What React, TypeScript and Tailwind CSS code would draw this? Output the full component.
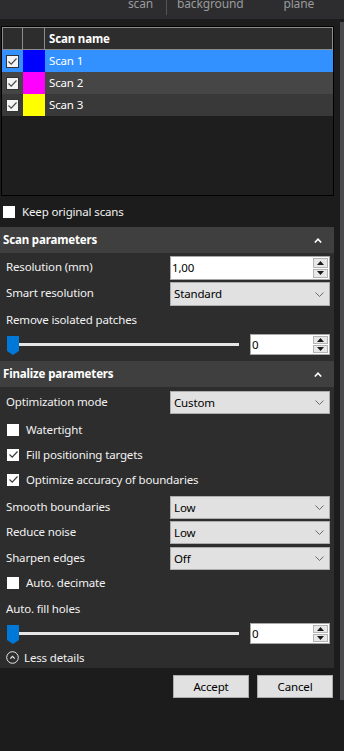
import React from 'react';

const FONT = { fontFamily: '"Noto Sans", "Liberation Sans", sans-serif' };

function CheckBox({ checked, plain }: { checked?: boolean; plain?: boolean }) {
  return (
    <span
      className={
        plain
          ? 'flex shrink-0 items-center justify-center w-[12px] h-[12px] bg-white'
          : 'flex shrink-0 items-center justify-center w-[13px] h-[13px] bg-[#f4f4f4] border border-[#333333]'
      }
    >
      {checked && (
        <svg width="11" height="11" viewBox="0 0 11 11">
          <path d="M1.5 5.5 L4.2 8.2 L9.5 2.5" stroke="#4a4a4a" strokeWidth="1.2" fill="none" />
        </svg>
      )}
    </span>
  );
}

function Chevron() {
  return (
    <svg width="9" height="5" viewBox="0 0 9 5">
      <polyline points="0.5,0.5 4.5,4.5 8.5,0.5" stroke="#6a6a6a" strokeWidth="1" fill="none" />
    </svg>
  );
}

function Combo({ value }: { value: string }) {
  return (
    <div className="w-[160px] h-full flex items-center justify-between bg-[#e1e1e1] border border-[#adadad] pl-[3px] pr-[5px] text-black">
      <span>{value}</span>
      <Chevron />
    </div>
  );
}

function SpinBox({ value, width }: { value: string; width: string }) {
  return (
    <div className={`${width} h-full flex bg-white border border-[#a8a8a8] text-black`}>
      <div className="flex-1 flex items-center pl-[1px]">{value}</div>
      <div className="flex flex-col w-[15px] my-[1px] mr-[1px] gap-[1px]">
        <div className="flex-1 flex items-center justify-center bg-[#e8e8e8] border border-[#b4b4b4]">
          <svg width="7" height="4" viewBox="0 0 7 4">
            <path d="M0 4 L3.5 0 L7 4 Z" fill="#1a1a1a" />
          </svg>
        </div>
        <div className="flex-1 flex items-center justify-center bg-[#e8e8e8] border border-[#b4b4b4]">
          <svg width="7" height="4" viewBox="0 0 7 4">
            <path d="M0 0 L7 0 L3.5 4 Z" fill="#1a1a1a" />
          </svg>
        </div>
      </div>
    </div>
  );
}

function SliderRow() {
  return (
    <div className="h-[21px] flex items-stretch pl-[6px] pr-[4px]">
      <div className="relative w-[234px] flex items-center">
        <div className="ml-[4px] w-[229px] h-[3px] bg-[#e6e6e6]" />
        <svg className="absolute left-[1px] top-[2px]" width="12" height="19" viewBox="0 0 12 19">
          <path d="M0 0 H12 V15 L6 19 L0 15 Z" fill="#0078d7" />
        </svg>
      </div>
      <div className="ml-auto">
        <SpinBox value="0" width="w-[80px]" />
      </div>
    </div>
  );
}

function SectionHeader({ title }: { title: string }) {
  return (
    <div className="h-[26px] flex items-center justify-between bg-[#3f3f3f] pl-[3px] pr-[12px]">
      <span className="font-bold text-white">{title}</span>
      <svg width="8" height="5" viewBox="0 0 8 5">
        <polyline points="0.8,4.5 4,1.2 7.2,4.5" stroke="#ffffff" strokeWidth="1.6" fill="none" />
      </svg>
    </div>
  );
}

function LabeledRow({ label, children, className }: { label: string; children: React.ReactNode; className: string }) {
  return (
    <div className={`flex items-stretch pl-[6px] pr-[4px] ${className}`}>
      <span className="flex-1 flex items-center pb-[2px]">{label}</span>
      {children}
    </div>
  );
}

function CheckRow({ label, checked }: { label: string; checked?: boolean }) {
  return (
    <div className="h-[25px] flex items-center gap-[7px] pl-[7px]">
      {checked ? (
        <span className="flex shrink-0 items-center justify-center w-[12px] h-[12px] bg-white">
          <svg width="11" height="11" viewBox="0 0 11 11">
            <path d="M1.5 5.5 L4.2 8.2 L9.5 2.5" stroke="#3a3a3a" strokeWidth="1.2" fill="none" />
          </svg>
        </span>
      ) : (
        <CheckBox plain />
      )}
      <span>{label}</span>
    </div>
  );
}

const scans = [
  { name: 'Scan 1', color: 'bg-[#0000ff]', row: 'bg-[#3391ff]' },
  { name: 'Scan 2', color: 'bg-[#ff00ff]', row: 'bg-[#464646]' },
  { name: 'Scan 3', color: 'bg-[#ffff00]', row: 'bg-[#393939]' },
];

export default function App() {
  return (
    <div className="w-[344px] h-[751px] overflow-hidden bg-[#1c1c1c] text-[11.5px] tracking-[-0.15px] text-[#f2f2f2]" style={FONT}>
      {/* Tabs strip */}
      <div className="h-[19px] bg-[#2d2d30] flex items-start overflow-hidden text-[#9a9a9a] text-[12px] leading-[14px]">
        <span className="ml-[128px] mt-[-3px]">scan</span>
        <span className="ml-[13px] w-px h-[15px] bg-[#555555]" />
        <span className="ml-[10px] mt-[-3px]">background</span>
        <span className="ml-[40px] mt-[-3px]">plane</span>
      </div>

      <div className="flex">
        <div className="w-[334px] pt-[7px]">
          {/* Scan table */}
          <div className="ml-[1px] w-[333px] h-[170px] border border-black bg-[#1e1e1e]">
            <div className="h-[23px] flex border border-[#8c8c8c] bg-[#2d2d2d]">
              <div className="w-[20px] border-r border-[#8c8c8c]" />
              <div className="w-[22px] border-r border-[#8c8c8c]" />
              <div className="flex-1 flex items-center pl-[4px] font-bold text-white">Scan name</div>
            </div>
            {scans.map((s) => (
              <div key={s.name} className={`h-[22px] flex items-stretch ${s.row}`}>
                <div className="w-[21px] flex items-center justify-center">
                  <CheckBox checked />
                </div>
                <div className={`w-[22px] ${s.color}`} />
                <div className="flex items-center pl-[4px] text-white">{s.name}</div>
              </div>
            ))}
          </div>

          {/* Keep original */}
          <div className="h-[31px] flex items-center gap-[7px] pl-[3px]">
            <CheckBox plain />
            <span>Keep original scans</span>
          </div>

          {/* Scan parameters */}
          <div className="bg-[#2d2d2d]">
            <SectionHeader title="Scan parameters" />
            <div className="pt-[3px] pb-[6px] flex flex-col">
              <LabeledRow label="Resolution (mm)" className="h-[24px]">
                <SpinBox value="1,00" width="w-[160px]" />
              </LabeledRow>
              <LabeledRow label="Smart resolution" className="h-[24px] mt-[2px]">
                <Combo value="Standard" />
              </LabeledRow>
              <div className="h-[28px] flex items-center pl-[6px]">Remove isolated patches</div>
              <SliderRow />
            </div>

            <SectionHeader title="Finalize parameters" />
            <div className="pt-[4px] flex flex-col">
              <LabeledRow label="Optimization mode" className="h-[23px]">
                <Combo value="Custom" />
              </LabeledRow>
              <div className="mt-[3px]">
                <CheckRow label="Watertight" />
                <CheckRow label="Fill positioning targets" checked />
                <CheckRow label="Optimize accuracy of boundaries" checked />
              </div>
              <LabeledRow label="Smooth boundaries" className="h-[23px] mt-[4px]">
                <Combo value="Low" />
              </LabeledRow>
              <LabeledRow label="Reduce noise" className="h-[23px] mt-[2px]">
                <Combo value="Low" />
              </LabeledRow>
              <LabeledRow label="Sharpen edges" className="h-[23px] mt-[3px]">
                <Combo value="Off" />
              </LabeledRow>
              <CheckRow label="Auto. decimate" />
              <div className="h-[28px] flex items-center pl-[6px]">Auto. fill holes</div>
              <SliderRow />
              <div className="h-[24px] pt-[3px] flex items-center gap-[5px] pl-[6px]">
                <svg width="13" height="13" viewBox="0 0 13 13">
                  <circle cx="6.5" cy="6.5" r="5.8" stroke="#e8e8e8" strokeWidth="1" fill="none" />
                  <polyline points="4.3,7.6 6.5,5.4 8.7,7.6" stroke="#e8e8e8" strokeWidth="1.3" fill="none" />
                </svg>
                <span>Less details</span>
              </div>
            </div>
          </div>

          {/* Buttons */}
          <div className="mt-[7px] flex justify-end gap-[8px] pr-[1px]">
            <button className="w-[76px] h-[23px] bg-[#e1e1e1] border border-[#adadad] text-black">Accept</button>
            <button className="w-[76px] h-[23px] bg-[#e1e1e1] border border-[#adadad] text-black">Cancel</button>
          </div>
        </div>

        {/* Scrollbar */}
        <div className="ml-[6px] mt-[3px] w-[4px] h-[678px] bg-[#4a4a4e]" />
      </div>
    </div>
  );
}
